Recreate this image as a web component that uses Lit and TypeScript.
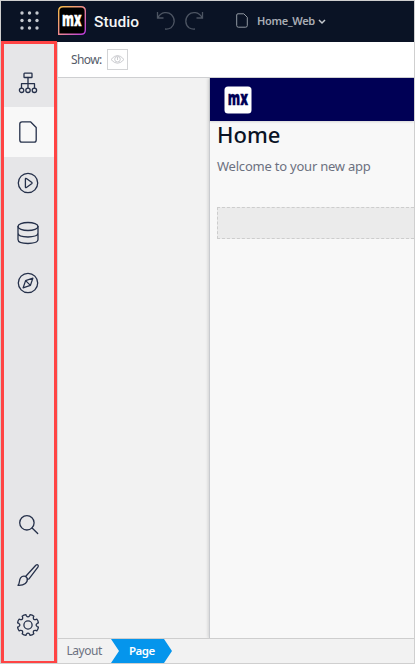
import { LitElement, html, css, svg } from "lit";
import { customElement } from "lit/decorators.js";

const gearPath = (() => {
  const pts: string[] = [];
  const n = 8;
  for (let i = 0; i < n; i++) {
    const mid = ((i + 0.5) * 2 * Math.PI) / n - Math.PI / 2;
    const p = (r: number, a: number) =>
      `${(11 + r * Math.cos(mid + a)).toFixed(2)} ${(11 + r * Math.sin(mid + a)).toFixed(2)}`;
    pts.push(`${i ? "L" : "M"}${p(10.6, -0.19)} Q${p(11.1, 0)} ${p(10.6, 0.19)} L${p(9.3, 0.22)} Q${p(7.1, 0.393)} ${p(9.3, 0.565)}`);
  }
  return pts.join(" ") + "Z";
})();

const icons = {
  tree: svg`<rect x="7" y="1.2" width="8" height="4.3" rx=".6"/><path d="M11 5.5V16M4.5 16V11.7H17.5V16"/><circle cx="4.6" cy="18.3" r="2.2"/><circle cx="11" cy="18.3" r="2.2"/><circle cx="17.4" cy="18.3" r="2.2"/>`,
  page: svg`<path d="M5 .8H13.5L19.2 6.5V19Q19.2 21.2 17 21.2H5Q2.8 21.2 2.8 19V3Q2.8 .8 5 .8Z"/>`,
  play: svg`<circle cx="11" cy="11" r="9.7"/><path d="M8.4 7Q8.4 6 9.4 6.5L14.6 10.2Q15.5 11 14.6 11.8L9.4 15.5Q8.4 16 8.4 15Z"/>`,
  data: svg`<ellipse cx="11" cy="4.5" rx="10" ry="4"/><path d="M1 4.5V17.5C1 22.8 21 22.8 21 17.5V4.5M1 11C1 16.3 21 16.3 21 11"/>`,
  compass: svg`<circle cx="11" cy="11" r="9.7"/><path d="M15.9 6.1L13.4 13.4L6.1 15.9L8.6 8.6ZM8.6 8.6L13.4 13.4"/>`,
  search: svg`<circle cx="9.9" cy="8.8" r="7.2"/><path d="M15.1 14L20.7 19.5"/>`,
  brush: svg`<path d="M8.8 12.2L18.8 1.2Q20.2 .2 21 1.1Q21.7 2 20.9 3.2L12 14.8M3.6 13.8C5.5 11.3 9.3 11.6 10.2 14.3C11 18.2 7.5 21.7 1 21.3C3.2 19 1.7 16.5 3.6 13.8ZM8.5 12.4L11 15.3"/>`,
  gear: svg`<path d="${gearPath}"/><circle cx="11" cy="11" r="4.1"/>`,
};

@customElement("app-root")
export class AppRoot extends LitElement {
  static styles = css`
    :host {
      display: flex; flex-direction: column; box-sizing: border-box;
      width: 415px; height: 664px; border: 1px solid #cfcfcf; overflow: hidden;
      font-family: "Noto Sans", sans-serif; background: #f2f2f2; color: #0a1325;
    }
    * { box-sizing: border-box; }
    svg { display: block; fill: none; flex: none; overflow: visible; }
    .top { height: 41px; flex: none; display: flex; align-items: center; background: #0a1325; }
    .dots { margin-left: 19px; margin-top: -2px; fill: #c5c9cf; }
    .brand { margin-left: 19px; margin-top: -2px; }
    .studio { margin-left: 8px; width: 62px; font: 500 15.5px Roboto, sans-serif; letter-spacing: .1px; color: #f4f5f6; }
    .history { stroke: #4c5462; stroke-width: 1.3; margin-top: -2px; }
    .redo { margin-left: 8px; }
    .file { margin-left: 32px; stroke: #9299a2; margin-top: -2px; }
    .title { margin: -3px 0 0 9px; width: 61px; font: 600 11px "Noto Sans", sans-serif; letter-spacing: -.3px; color: #a9adb4; white-space: nowrap; }
    .chevron { stroke: #c5c9cf; stroke-width: 1.5; }
    .body { flex: 1; min-height: 0; display: flex; }
    .side {
      width: 56px; margin: -1px 0 -1px; border: 3px solid #ff4444; background: #e6e6e8;
      display: flex; flex-direction: column; padding: 13px 0 11px; position: relative;
    }
    .item { height: 50px; flex: none; display: flex; align-items: flex-start; justify-content: center; padding: 14.5px 1.4px 0 0; }
    .item svg { stroke: #25304a; stroke-width: 1.3; stroke-linejoin: round; stroke-linecap: round; }
    .active { background: #f8f8f8; padding-top: 13.5px; }
    .space { flex: 1; }
    .space ~ .item { padding-top: 14px; }
    .main { flex: 1; min-width: 0; display: flex; flex-direction: column; border-left: 1px solid #d2d3d5; }
    .tools {
      height: 36px; flex: none; display: flex; align-items: center; padding-left: 13px;
      background: #fff; border-bottom: 1px solid #cecfd1; font-size: 12px; color: #555b69;
    }
    .show { width: 36px; letter-spacing: -.6px; }
    .eye { width: 21px; height: 21px; border: 1px solid #d3d4d6; display: grid; place-items: center; }
    .eye svg { stroke: #cbccd0; }
    .canvas { flex: 1; min-height: 0; display: flex; justify-content: flex-end; }
    .sheet { width: 205px; background: #f8f8f8; border-left: 1px solid #c9cbcf; box-shadow: -1px 0 3px #0002; clip-path: inset(0 0 0 -5px); }
    .nav { height: 43px; background: #000055; padding: 8px 14px; box-shadow: 0 1px 2px #0002; }
    .content { padding-left: 7px; }
    h1 { margin: 0; font: 500 22px/26px "Noto Sans", sans-serif; }
    p { margin: 9px 0 0; font-size: 13px; line-height: 20px; letter-spacing: -.22px; color: #6c7180; white-space: nowrap; }
    .drop { height: 32px; margin-top: 31px; background: #ebebeb; border: 1px dashed #cdcdcd; border-right: 0; }
    .crumbs { height: 25px; flex: none; display: flex; border-top: 1px solid #cecece; font-size: 12px; line-height: 24px; color: #6c7180; }
    .layout { width: 53px; padding-left: 8.5px; letter-spacing: -.45px; }
    .page { width: 61px; padding-left: 18px; color: #fff; font-weight: 600; font-size: 11.5px; letter-spacing: -.5px; background: #0595ec; clip-path: polygon(0 0, 53px 0, 100% 50%, 53px 100%, 0 100%, 8px 50%); }
    .mark { font: 800 19px "Open Sans", sans-serif; }
  `;

  private item(name: keyof typeof icons, active = false) {
    return html`<div class="item ${active ? "active" : ""}">
      <svg width="22" height="22" viewBox="0 0 22 22">${icons[name]}</svg>
    </div>`;
  }

  render() {
    return html`
      <div class="top">
        <svg class="dots" width="19" height="19">
          ${[2, 9.5, 17].map((y) => [2, 9.5, 17].map((x) => svg`<circle cx="${x}" cy="${y}" r="1.7"/>`))}
        </svg>
        <svg class="brand" width="28" height="29" viewBox="0 0 28 29">
          <defs><linearGradient id="edge" x2="1" y2="1"><stop stop-color="#f6bd45"/><stop offset=".5" stop-color="#ef8a91"/><stop offset="1" stop-color="#b637dc"/></linearGradient></defs>
          <path d="M5 .7H23Q27.3 .7 27.3 5V24Q27.3 28.3 23 28.3H.7V5Q.7 .7 5 .7Z" fill="#000" stroke="url(#edge)" stroke-width="1.4"/>
          <text class="mark" x="4" y="19.6" textLength="19.5" lengthAdjust="spacingAndGlyphs" fill="#fff" stroke="#fff" stroke-width=".4">mx</text>
        </svg>
        <span class="studio">Studio</span>
        <svg class="history" width="20" height="20"><path d="M1.5 1V7H7.5M2 6.5C5 .7 12 .3 15.5 3.8C19.5 7.8 18.8 13.8 15 16.7C13 18 10.5 18.2 9 18"/></svg>
        <svg class="history redo" width="20" height="20"><path d="M18.5 1V7H12.5M18 6.5C15 .7 8 .3 4.5 3.8C.5 7.8 1.2 13.8 5 16.7C7 18 9.5 18.2 11 18"/></svg>
        <svg class="file" width="12" height="15"><path d="M2 .8H7.8L11.3 4.3V12.5Q11.3 14.2 9.6 14.2H2.4Q.7 14.2 .7 12.5V2Q.7 .8 2 .8Z"/></svg>
        <span class="title">Home_Web</span>
        <svg class="chevron" width="8" height="6"><path d="M1 1L4 4L7 1"/></svg>
      </div>
      <div class="body">
        <div class="side">
          ${this.item("tree")}${this.item("page", true)}${this.item("play")}${this.item("data")}${this.item("compass")}
          <div class="space"></div>
          ${this.item("search")}${this.item("brush")}${this.item("gear")}
        </div>
        <div class="main">
          <div class="tools"><span class="show">Show:</span><div class="eye">
            <svg width="15" height="11"><path d="M1 5.5Q7.5-2.5 14 5.5Q7.5 13 1 5.5Z"/><circle cx="7.5" cy="5.2" r="2.8"/><path d="M7.5 3V6"/></svg>
          </div></div>
          <div class="canvas"><div class="sheet">
            <div class="nav"><svg width="28" height="28"><rect x=".5" y=".5" width="27" height="27" rx="3.5" fill="#fff"/>
              <text class="mark" x="3.8" y="19" textLength="20.2" lengthAdjust="spacingAndGlyphs" fill="#000055" stroke="#000055" stroke-width=".4">mx</text></svg></div>
            <div class="content"><h1>Home</h1><p>Welcome to your new app</p><div class="drop"></div></div>
          </div></div>
          <div class="crumbs"><span class="layout">Layout</span><span class="page">Page</span></div>
        </div>
      </div>`;
  }
}
